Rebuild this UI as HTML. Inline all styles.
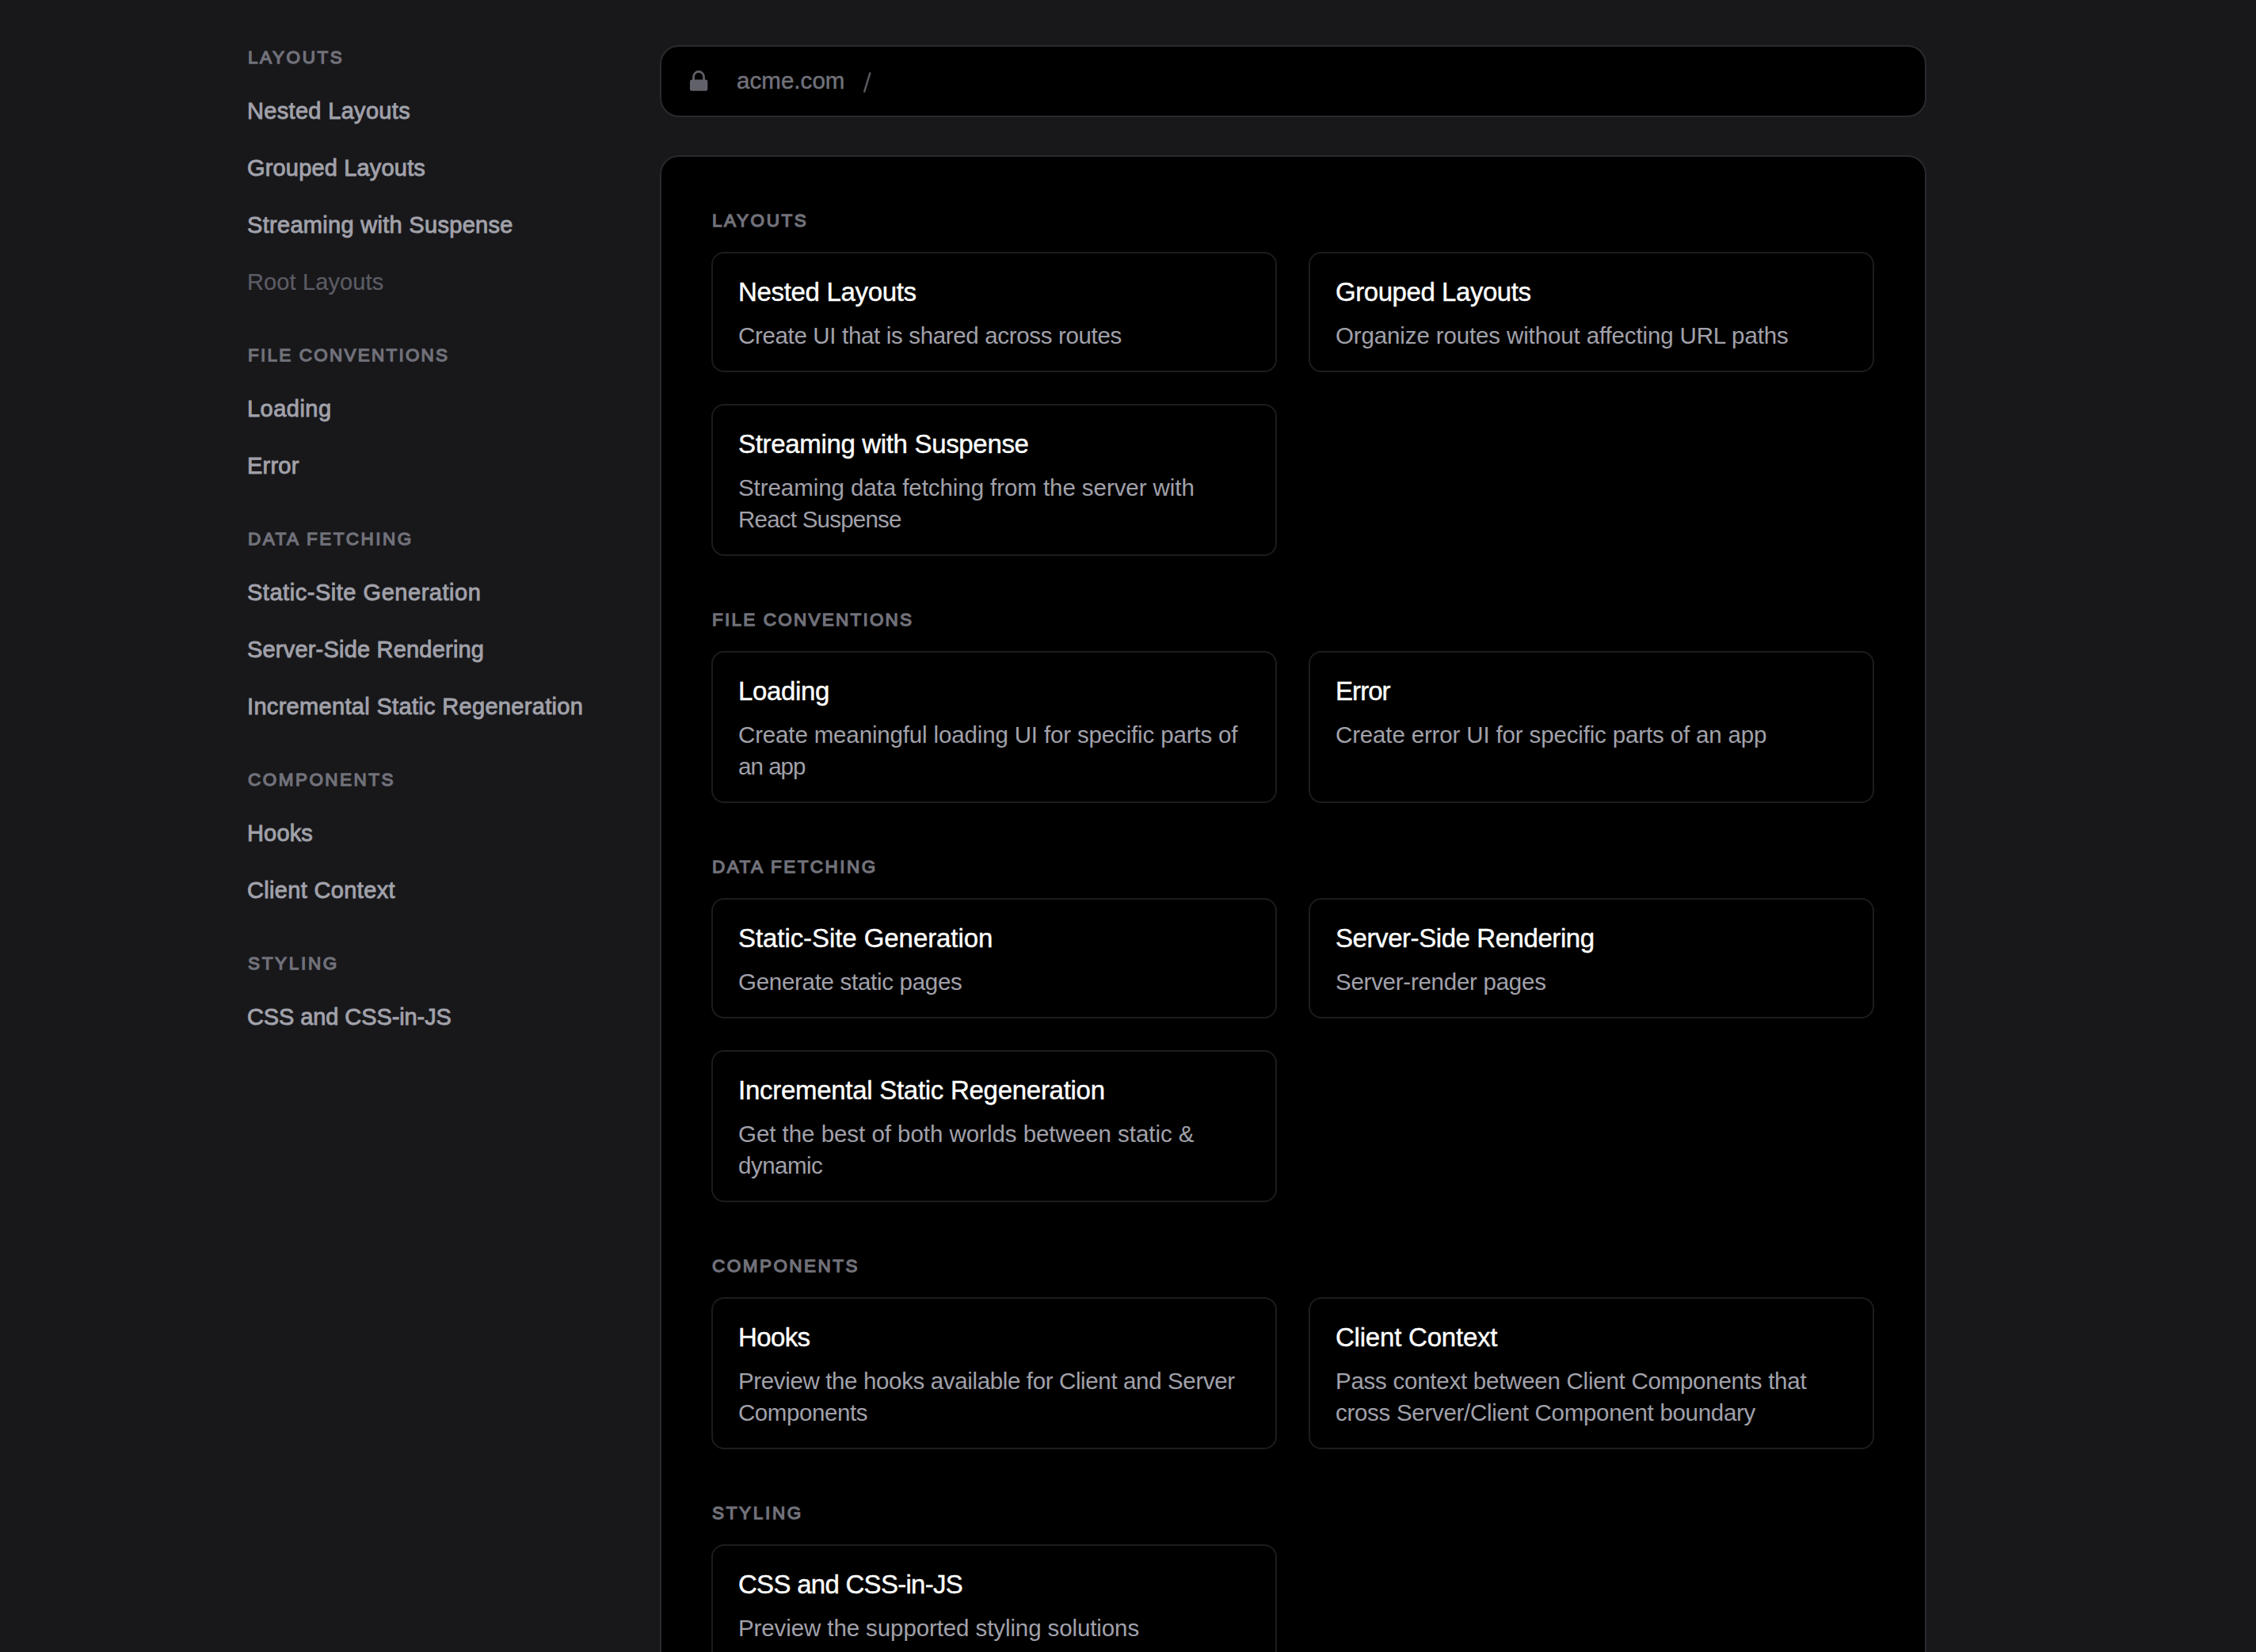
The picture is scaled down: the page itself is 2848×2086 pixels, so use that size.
<!DOCTYPE html>
<html>
<head>
<meta charset="utf-8">
<style>
html,body{margin:0;padding:0;}
body{width:2848px;height:2086px;overflow:hidden;background:#18181b;position:relative;font-family:"Liberation Sans",sans-serif;}
.abs{position:absolute;}
/* sidebar */
.sh{position:absolute;left:313px;height:32px;line-height:32px;font-size:22.5px;font-weight:400;letter-spacing:2.3px;-webkit-text-stroke:1.3px #71717a;color:#71717a;text-transform:uppercase;white-space:nowrap;}
.si{position:absolute;left:312px;height:40px;line-height:40px;font-size:29px;letter-spacing:0.38px;-webkit-text-stroke:0.9px #a1a1aa;color:#a1a1aa;white-space:nowrap;}
.si.dim{color:#5c5c64;-webkit-text-stroke:0.2px #5c5c64;}
/* address bar */
.bar{position:absolute;left:833px;top:57px;width:1595px;height:87px;border:2px solid #2a2a2e;border-radius:24px;background:#000;}
.bar svg{position:absolute;left:31px;top:27px;}
.bar .host{position:absolute;left:95px;top:23px;height:40px;line-height:40px;font-size:29.5px;letter-spacing:0.05px;-webkit-text-stroke:0.5px #71717a;color:#71717a;white-space:nowrap;}
.bar .slash{position:absolute;left:256px;top:24px;height:40px;line-height:40px;font-size:28.5px;-webkit-text-stroke:0.3px #52525b;color:#52525b;}
/* main */
.main{position:absolute;left:833px;top:196px;width:1595px;height:2200px;border:2px solid #2a2a2e;border-radius:24px;background:#000;}
.h{position:absolute;left:899px;height:32px;line-height:32px;font-size:22.5px;font-weight:400;letter-spacing:2.3px;-webkit-text-stroke:1.3px #71717a;color:#71717a;text-transform:uppercase;white-space:nowrap;}
.card{position:absolute;width:710px;border:2px solid #1c1c1f;border-radius:16px;background:#000;box-sizing:content-box;}
.card .t{position:absolute;left:32px;top:25px;height:48px;line-height:48px;font-size:33px;letter-spacing:-0.28px;-webkit-text-stroke:0.4px #fff;color:#fff;white-space:nowrap;}
.card .d{position:absolute;left:32px;top:84px;white-space:nowrap;line-height:40px;font-size:29.5px;letter-spacing:-0.15px;color:#a1a1aa;}
.c1{left:898px;}
.c2{left:1652px;}
.r1{height:148px;}
.r2{height:188px;}
</style>
</head>
<body>
<div class="sh" style="top:57px;letter-spacing:2.57px">Layouts</div>
<div class="si" style="top:120px;letter-spacing:0.32px">Nested Layouts</div>
<div class="si" style="top:192px;letter-spacing:0.17px">Grouped Layouts</div>
<div class="si" style="top:264px;letter-spacing:0.3px">Streaming with Suspense</div>
<div class="si dim" style="top:336px;letter-spacing:0.12px">Root Layouts</div>
<div class="sh" style="top:433px;letter-spacing:2.22px">File Conventions</div>
<div class="si" style="top:496px;letter-spacing:0.48px">Loading</div>
<div class="si" style="top:568px;letter-spacing:0.21px">Error</div>
<div class="sh" style="top:665px;letter-spacing:2.46px">Data Fetching</div>
<div class="si" style="top:728px;letter-spacing:0.53px">Static-Site Generation</div>
<div class="si" style="top:800px;letter-spacing:0.2px">Server-Side Rendering</div>
<div class="si" style="top:872px;letter-spacing:0.32px">Incremental Static Regeneration</div>
<div class="sh" style="top:969px;letter-spacing:2.47px">Components</div>
<div class="si" style="top:1032px;letter-spacing:0.16px">Hooks</div>
<div class="si" style="top:1104px;letter-spacing:0.34px">Client Context</div>
<div class="sh" style="top:1201px;letter-spacing:2.68px">Styling</div>
<div class="si" style="top:1264px;letter-spacing:-0.1px">CSS and CSS-in-JS</div>
<!-- address bar -->
<div class="bar">
  <svg width="32" height="32" viewBox="0 0 32 32"><rect x="5" y="14.4" width="22.3" height="14.4" rx="2.5" fill="#616169"/><path d="M9.55 15V10.95A6.5 6.5 0 0 1 22.55 10.95V15" fill="none" stroke="#616169" stroke-width="2.7"/></svg>
  <div class="host">acme.com</div>
  <svg class="sl" width="12" height="30" viewBox="0 0 12 30" style="position:absolute;left:253px;top:30px"><line x1="3.2" y1="26.6" x2="10.3" y2="3.4" stroke="#5a5a62" stroke-width="2.4" stroke-linecap="round"/></svg>
</div>

<div class="main"></div>
<div class="h" style="top:263px;letter-spacing:2.57px">Layouts</div>
<div class="card c1" style="top:318px;height:148px"><div class="t" style="letter-spacing:-0.33px">Nested Layouts</div><div class="d"><span style="letter-spacing:-0.34px">Create UI that is shared across routes</span></div></div>
<div class="card c2" style="top:318px;height:148px"><div class="t" style="letter-spacing:-0.44px">Grouped Layouts</div><div class="d"><span style="letter-spacing:-0.13px">Organize routes without affecting URL paths</span></div></div>
<div class="card c1" style="top:510px;height:188px"><div class="t" style="letter-spacing:-0.33px">Streaming with Suspense</div><div class="d"><span style="letter-spacing:-0.07px">Streaming data fetching from the server with</span><br><span style="letter-spacing:-0.77px">React Suspense</span></div></div>
<div class="h" style="top:767px;letter-spacing:2.22px">File Conventions</div>
<div class="card c1" style="top:822px;height:188px"><div class="t" style="letter-spacing:-0.36px">Loading</div><div class="d"><span style="letter-spacing:-0.15px">Create meaningful loading UI for specific parts of</span><br><span style="letter-spacing:-0.95px">an app</span></div></div>
<div class="card c2" style="top:822px;height:188px"><div class="t" style="letter-spacing:-0.93px">Error</div><div class="d"><span style="letter-spacing:-0.15px">Create error UI for specific parts of an app</span></div></div>
<div class="h" style="top:1079px;letter-spacing:2.46px">Data Fetching</div>
<div class="card c1" style="top:1134px;height:148px"><div class="t" style="letter-spacing:-0.07px">Static-Site Generation</div><div class="d"><span style="letter-spacing:-0.29px">Generate static pages</span></div></div>
<div class="card c2" style="top:1134px;height:148px"><div class="t" style="letter-spacing:-0.43px">Server-Side Rendering</div><div class="d"><span style="letter-spacing:-0.26px">Server-render pages</span></div></div>
<div class="card c1" style="top:1326px;height:188px"><div class="t" style="letter-spacing:-0.28px">Incremental Static Regeneration</div><div class="d"><span style="letter-spacing:-0.04px">Get the best of both worlds between static &amp;</span><br><span style="letter-spacing:-0.5px">dynamic</span></div></div>
<div class="h" style="top:1583px;letter-spacing:2.47px">Components</div>
<div class="card c1" style="top:1638px;height:188px"><div class="t" style="letter-spacing:-0.63px">Hooks</div><div class="d"><span style="letter-spacing:-0.36px">Preview the hooks available for Client and Server</span><br><span style="letter-spacing:-0.43px">Components</span></div></div>
<div class="card c2" style="top:1638px;height:188px"><div class="t" style="letter-spacing:-0.21px">Client Context</div><div class="d"><span style="letter-spacing:-0.25px">Pass context between Client Components that</span><br><span style="letter-spacing:-0.29px">cross Server/Client Component boundary</span></div></div>
<div class="h" style="top:1895px;letter-spacing:2.68px">Styling</div>
<div class="card c1" style="top:1950px;height:148px"><div class="t" style="letter-spacing:-0.72px">CSS and CSS-in-JS</div><div class="d"><span style="letter-spacing:-0.1px">Preview the supported styling solutions</span></div></div>
</body>
</html>
